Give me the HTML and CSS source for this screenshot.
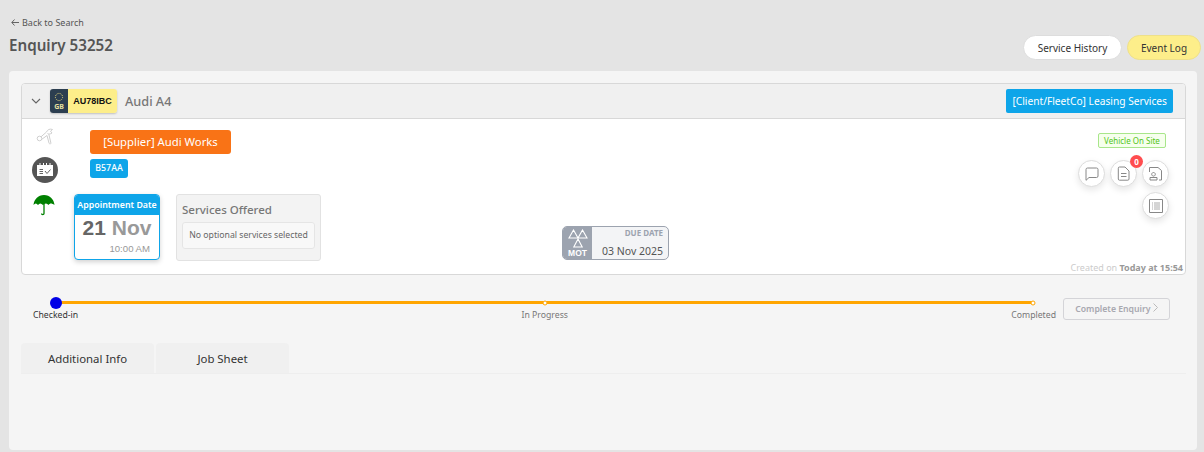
FILE: index.html
```html
<!DOCTYPE html>
<html lang="en">
<head>
<meta charset="utf-8">
<title>Enquiry 53252</title>
<link rel="stylesheet" href="styles.css">
</head>
<body>
<div class="page">
  <header class="top">
    <div class="top-left">
      <a class="back"><svg class="back-arrow" width="8" height="7" viewBox="0 0 8 7"><path d="M3.500.500L.800 3.500l2.700 3M1 3.500h7" fill="none" stroke="#555" stroke-width=".9"/></svg>Back to Search</a>
      <h1 class="title">Enquiry 53252</h1>
    </div>
    <div class="top-actions">
      <button class="pill pill-white">Service History</button>
      <button class="pill pill-yellow">Event Log</button>
    </div>
  </header>
  <main class="card">
    <section class="vehicle">
      <div class="vehicle-head">
        <svg class="chev" width="10" height="6" viewBox="0 0 10 6"><path d="M1 1l4 4 4-4" fill="none" stroke="#666" stroke-width="1.1"/></svg>
        <div class="plate">
          <div class="plate-flag">
            <svg width="10" height="10" viewBox="0 0 10 10"><circle cx="5" cy="5" r="3.6" fill="none" stroke="#e8d87a" stroke-width="1" stroke-dasharray="1 1"/></svg>
            <span>GB</span>
          </div>
          <div class="plate-num">AU78IBC</div>
        </div>
        <span class="vehicle-name">Audi A4</span>
        <span class="client-tag">[Client/FleetCo] Leasing Services</span>
      </div>
      <div class="vehicle-body">
        <div class="side-icons">
          <svg class="ic-tool" width="18" height="17" viewBox="0 0 18 17"><g fill="none" stroke="#cfcfcf" stroke-width="1"><circle cx="3.500" cy="10.500" r="2.300"/><path d="M5 8.800L10.500 4M5.500 11.500L11 7.500M10.500 4C11.500 1.500 14 .5 16.500 1.500L14.500 3.200 16 5C14.500 6.200 12.500 6.200 11.500 5.500M11 7.500l2 7.500c.4 1.400 2 1.200 1.900 0L12.800 6"/></g></svg>
          <div class="ic-cal">
            <svg width="16" height="14" viewBox="0 0 16 14"><path d="M0 2h16v11H0z" fill="#fff"/><path d="M3 0v3M6.500 0v3M9.500 0v3M13 0v3" stroke="#fff" stroke-width="1"/><path d="M2.500 6.500h3.500M2.500 8.500h3.500M2.500 10.500h3.500M8 8l2 2.500 3.500-4" stroke="#666" stroke-width="1" fill="none"/></svg>
          </div>
          <svg class="ic-umb" width="22" height="22" viewBox="0 0 22 22"><path d="M11 1C5 1 1 5.500 .5 11c1.500-2 3-2 4.500 0 1.500-2 3-2 5 0 2-2 4-2 5.500 0 1.500-2 3-2 6 0C21 5.500 17 1 11 1z" fill="#008000"/><path d="M11 10v9.500c0 1.500-2.500 1.500-2.500 0" fill="none" stroke="#008000" stroke-width="1.300"/></svg>
        </div>
        <div class="content">
          <div class="tags">
            <span class="supplier">[Supplier] Audi Works</span>
            <span class="code">B57AA</span>
          </div>
          <div class="info-row">
            <div class="appt">
              <div class="appt-head">Appointment Date</div>
              <div class="appt-date"><b>21</b> <span>Nov</span></div>
              <div class="appt-time">10:00 AM</div>
            </div>
            <div class="services">
              <div class="services-title">Services Offered</div>
              <div class="services-box">No optional services selected</div>
            </div>
            <div class="mot-wrap">
              <div class="mot">
                <div class="mot-icon">
                  <svg width="20" height="19" viewBox="0 0 20 19"><path d="M5.500 1L1 9h9zM14.500 1L10 9h9zM10 10l-4.200 8h8.400z" fill="none" stroke="#fff" stroke-width="1.100"/></svg>
                  <span>MOT</span>
                </div>
                <div class="mot-info">
                  <div class="mot-label">DUE DATE</div>
                  <div class="mot-date">03 Nov 2025</div>
                </div>
              </div>
            </div>
          </div>
        </div>
        <aside class="right">
          <span class="status">Vehicle On Site</span>
          <div class="round-grid">
            <button class="round"><svg width="14" height="14" viewBox="0 0 14 14"><path d="M2.500 1h9A1.500 1.500 0 0 1 13 2.500v6.500A1.500 1.500 0 0 1 11.500 10.500H4L1 13.300V2.500A1.500 1.500 0 0 1 2.500 1z" fill="none" stroke="#888" stroke-width="1"/></svg></button>
            <button class="round round-badge"><svg width="13" height="15" viewBox="0 0 13 15"><path d="M2.500 1H8l4 4v8a1.200 1.200 0 0 1-1.200 1.200H2.500A1.200 1.200 0 0 1 1.300 13V2.200A1.200 1.200 0 0 1 2.500 1zM4 7.500h5.500M4 10.500h5.500" fill="none" stroke="#888" stroke-width="1"/></svg><span class="badge">0</span></button>
            <button class="round"><svg width="15" height="15" viewBox="0 0 15 15"><path d="M1.500 6V1.500h8.500l3.500 3V14H11M5.500 6.500a1.800 1.800 0 1 0 .01 0M2 14v-2.500h7V14z" fill="none" stroke="#888" stroke-width="1"/></svg></button>
            <button class="round"><svg width="14" height="14" viewBox="0 0 14 14"><path d="M.500.500h13v13H.500z" fill="none" stroke="#888" stroke-width="1"/><path d="M5 4h6M5 6h6M5 8h6M5 10h6M3 4h1M3 6h1M3 8h1M3 10h1" fill="none" stroke="#aaa" stroke-width="1"/></svg></button>
          </div>
          <div class="created">Created on <b>Today at 15:54</b></div>
        </aside>
      </div>
    </section>

    <section class="progress">
      <div class="timeline">
        <div class="track">
          <i class="dot dot-start"></i>
          <i class="dot dot-mid"></i>
          <i class="dot dot-end"></i>
        </div>
        <div class="steps">
          <span class="step step-on">Checked-in</span>
          <span class="step">In Progress</span>
          <span class="step">Completed</span>
        </div>
      </div>
      <button class="complete">Complete Enquiry <svg width="5" height="9" viewBox="0 0 5 9"><path d="M.5.500l4 4-4 4" fill="none" stroke="#bbb" stroke-width="1"/></svg></button>
    </section>

    <nav class="tabs">
      <a class="tab">Additional Info</a>
      <a class="tab">Job Sheet</a>
    </nav>
  </main>
</div>
</body>
</html>
```

FILE: styles.css
```css
* { box-sizing: border-box; }
html, body { margin: 0; padding: 0; height: 100%; overflow: hidden; }
body { background: #fff; font-family: "Noto Sans", "Open Sans", sans-serif; color: #444; }
.page { height: 452px; padding: 1px 3px 2px 0; background: #e4e4e4; display: flex; flex-direction: column; }
button { font-family: inherit; }

.top { height: 70px; display: flex; justify-content: space-between; padding: 0 0 0 9px; flex: none; }
.top-left { padding-top: 15px; }
.back { display: flex; align-items: center; font-size: 9px; line-height: 13px; color: #555; padding-left: 2px; }
.back-arrow { margin-right: 3px; }
.title { margin: 5px 0 0; font-size: 15.200px; line-height: 22px; font-weight: 600; color: #555; }
.top-actions { display: flex; gap: 5px; align-items: flex-start; padding-top: 34px; }
.pill { height: 25px; border-radius: 13px; border: 1px solid #ddd; font-size: 10px; color: #333; padding: 0; }
.pill-white { width: 99px; background: #fff; }
.pill-yellow { width: 74px; background: #fdee8a; border-color: #eee08a; }

.card { flex: 1; margin-left: 9px; margin-right: 4px; background: #f5f5f5; border-radius: 4px; padding: 12px 11px 0 12px; }

.vehicle { height: 192px; border: 1px solid #d8d8d8; border-radius: 4px; background: #fff; overflow: hidden; display: flex; flex-direction: column; }
.vehicle-head { height: 35px; flex: none; background: #f0f0f0; border-bottom: 1px solid #d8d8d8; display: flex; align-items: center; padding: 0 12px 0 9px; }
.chev { margin-right: 9px; }
.plate { width: 67px; height: 24px; display: flex; border-radius: 3px; overflow: hidden; box-shadow: 0 1px 2px rgba(0,0,0,.2); }
.plate-flag { width: 18px; background: #2c3e50; display: flex; flex-direction: column; align-items: center; justify-content: center; }
.plate-flag span { font-size: 7px; line-height: 9px; font-weight: 700; color: #e8e0a0; }
.plate-num { flex: 1; background: #fdee8a; font: 700 9px/24px "Liberation Sans", Arial, sans-serif; color: #111; text-align: center; }
.vehicle-name { margin-left: 8px; font-size: 12.700px; font-weight: 500; color: #777; }
.client-tag { margin-left: auto; height: 24px; line-height: 24px; padding: 0 6px; border-radius: 2px; background: #0ea5e9; color: #fff; font-size: 10.200px; }

.vehicle-body { flex: 1; display: flex; min-height: 0; position: relative; }
.side-icons { width: 52px; flex: none; padding: 9px 0 0 10px; display: flex; flex-direction: column; align-items: flex-start; }
.ic-tool { margin-left: 4px; }
.ic-cal { width: 26px; height: 26px; border-radius: 50%; background: #555; margin-top: 12px; display: flex; align-items: center; justify-content: center; }
.ic-umb { margin-top: 11px; margin-left: 1px; }

.content { flex: 1; min-width: 0; padding-top: 11px; display: flex; flex-direction: column; }
.tags { display: flex; flex-direction: column; align-items: flex-start; gap: 5px; padding-left: 16px; }
.supplier { height: 24px; line-height: 24px; width: 141px; text-align: center; background: #f97316; border-radius: 3px; color: #fff; font-size: 11.300px; }
.code { height: 19px; line-height: 19px; width: 38px; text-align: center; background: #0ea5e9; border-radius: 3px; color: #fff; font-size: 8.800px; font-weight: 500; }

.info-row { display: flex; align-items: flex-start; margin-top: 16px; }
.appt { width: 86px; height: 66px; border: 1px solid #0ea5e9; border-radius: 4px; background: #fff; overflow: hidden; box-shadow: 0 2px 5px rgba(0,0,0,.18); }
.appt-head { height: 20px; line-height: 20px; background: #0ea5e9; color: #fff; font-size: 8.800px; font-weight: 600; text-align: center; white-space: nowrap; }
.appt-date { font: 700 21px/26px "Liberation Sans", Arial, sans-serif; color: #999; text-align: center; }
.appt-date b { color: #666; }
.appt-time { font: 9.600px/12px "Liberation Sans", Arial, sans-serif; color: #999; text-align: right; padding-right: 9px; margin-top: 2px; }
.services { width: 145px; height: 67px; margin-left: 16px; background: #f3f3f3; border: 1px solid #e2e2e2; border-radius: 3px; padding: 6px 5px 0; }
.services-title { font-size: 11.500px; line-height: 17px; font-weight: 500; color: #777; }
.services-box { margin-top: 4px; height: 27px; line-height: 25px; background: #f8f8f8; border: 1px solid #e5e5e5; border-radius: 3px; font-size: 8.700px; color: #666; text-align: center; white-space: nowrap; }
.mot-wrap { padding: 32px 0 0 241px; }
.mot { width: 107px; height: 34px; display: flex; border: 1px solid #9ca3af; border-radius: 5px; overflow: hidden; background: #f3f4f6; }
.mot-icon { width: 29px; background: #9ca3af; display: flex; flex-direction: column; align-items: center; color: #fff; padding-top: 2px; }
.mot-icon svg { display: block; }
.mot-icon span { font: 700 8.500px/10px "Liberation Sans", Arial, sans-serif; }
.mot-info { flex: 1; padding: 0 5px; text-align: right; }
.mot-label { font-size: 8px; line-height: 11px; font-weight: 700; color: #9ca3af; }
.mot-date { margin-top: 6px; font-size: 10.500px; line-height: 14px; color: #555; white-space: nowrap; }

.right { width: 108px; flex: none; display: flex; flex-direction: column; align-items: flex-end; padding-top: 14px; }
.status { width: 68px; height: 15px; line-height: 13px; margin-right: 19px; border: 1px solid #a8e68a; border-radius: 2px; background: #f6ffed; color: #52c41a; font-size: 8px; text-align: center; white-space: nowrap; }
.round-grid { display: grid; grid-template-columns: repeat(3, 27px); gap: 5px; margin: 12px 16px 0 0; justify-items: center; }
.round { position: relative; width: 27px; height: 27px; padding: 0; border: 1px solid #ddd; border-radius: 50%; background: #fff; display: flex; align-items: center; justify-content: center; box-shadow: 0 3px 7px rgba(0,0,0,.1); }
.round:nth-child(4) { grid-column: 3; }
.badge { position: absolute; top: -6px; right: -7px; width: 13px; height: 13px; border-radius: 50%; background: #ff4d4f; color: #fff; font-size: 8px; line-height: 13px; font-weight: 700; text-align: center; }
.created { margin-top: auto; margin-right: 2px; font-size: 9px; line-height: 13px; color: #ccc; white-space: nowrap; }
.created b { color: #999; font-weight: 700; }

.progress { display: flex; align-items: flex-start; justify-content: flex-end; padding: 23px 16px 0 12px; height: 68px; }
.timeline { flex: 1; padding: 3px 0 0; }
.track { position: relative; height: 3px; margin: 0 23px 0 23px; background: #ffa500; }
.dot { position: absolute; top: 50%; border-radius: 50%; transform: translate(-50%, -50%); }
.dot-start { left: 0; width: 12px; height: 12px; background: #0000e6; }
.dot-mid { left: 50%; width: 5px; height: 5px; background: #fff; border: 1px solid #ffa500; }
.dot-end { left: 100%; width: 5px; height: 5px; background: #fff; border: 1px solid #ffa500; }
.steps { display: flex; justify-content: space-between; padding-top: 5px; font-size: 8.700px; line-height: 12px; }
.step { color: #777; }
.step-on { color: #333; }
.complete { width: 107px; height: 22px; margin-left: 7px; background: none; border: 1px solid #d4d4d8; border-radius: 3px; color: #a8a8b0; font-size: 8.700px; font-weight: 600; padding: 0; }

.tabs { display: flex; gap: 2px; height: 31px; border-bottom: 1px solid #eee; }
.tab { width: 133px; height: 30px; line-height: 31px; background: #f0f0f0; border-radius: 4px 4px 0 0; text-align: center; font-size: 11.400px; color: #333; }
```
